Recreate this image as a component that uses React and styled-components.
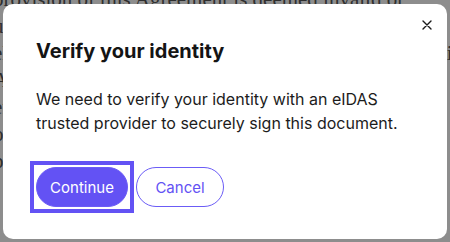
import React from 'react';
import styled, { createGlobalStyle } from 'styled-components';

const GlobalStyle = createGlobalStyle`
  html, body {
    margin: 0;
    padding: 0;
    background: #8d8d8d;
    overflow: hidden;
  }
`;

const Page = styled.div`
  position: relative;
  width: 450px;
  height: 242px;
  overflow: hidden;
`;

const Doc = styled.div`
  margin: -14px 0 0 -7px;
  font-family: 'Liberation Serif', serif;
  font-size: 21px;
  line-height: 27px;
  color: #2f2f2f;
  width: 470px;
`;

const Overlay = styled.div`
  position: absolute;
  inset: 0;
  padding: 4px 3px 3px 3px;
  display: flex;
  align-items: stretch;
`;

const Dialog = styled.div`
  position: relative;
  flex: 1;
  background: #ffffff;
  border-radius: 10px;
  padding: 33px 33px 0 33px;
  box-sizing: border-box;
  font-family: Inter, 'Noto Sans', sans-serif;
  color: #141414;
`;

const CloseButton = styled.button`
  position: absolute;
  top: 9px;
  right: 8px;
  width: 24px;
  height: 24px;
  border: none;
  background: none;
  padding: 0;
  display: flex;
  align-items: center;
  justify-content: center;
  cursor: pointer;
`;

const Title = styled.h2`
  margin: 0;
  font-size: 20px;
  line-height: 28px;
  font-weight: 700;
`;

const Body = styled.p`
  margin: 22px 0 0 0;
  font-size: 16px;
  line-height: 24px;
  font-weight: 400;
  color: #1c1c1c;
`;

const Actions = styled.div`
  display: flex;
  align-items: center;
  gap: 2px;
  margin-top: 26px;
  margin-left: -6px;
`;

const FocusRing = styled.span`
  display: inline-flex;
  padding: 2px;
  border: 4px solid #6352f4;
`;

const Button = styled.button`
  height: 40px;
  width: ${(p) => p.$width}px;
  padding: 0;
  border-radius: 20px;
  font-family: Inter, 'Noto Sans', sans-serif;
  font-size: 15px;
  cursor: pointer;
  border: 1px solid #6b5cf6;
  background: ${(p) => (p.$primary ? '#6352f4' : '#ffffff')};
  color: ${(p) => (p.$primary ? '#ffffff' : '#6352f4')};
  outline: none;
`;

export default function App() {
  return (
    <Page>
      <GlobalStyle />
      <Doc>
        provision of this Agreement is deemed invalid or
        unenforceable, that provision shall be limited or
        eliminated to the minimum extent necessary so that
        this Agreement shall otherwise remain in full force
        and effect and enforceable between the parties. No
        waiver of any term shall be deemed a further waiver.
        - The parties agree to the terms above.
      </Doc>
      <Overlay>
        <Dialog role="dialog" aria-labelledby="verify-title">
          <CloseButton aria-label="Close">
            <svg width="10" height="10" viewBox="0 0 10 10">
              <path d="M1 1 L9 9 M9 1 L1 9" stroke="#1a1a1a" strokeWidth="1.4" strokeLinecap="round" />
            </svg>
          </CloseButton>
          <Title id="verify-title">Verify your identity</Title>
          <Body>
            We need to verify your identity with an eIDAS trusted provider to securely sign this document.
          </Body>
          <Actions>
            <FocusRing>
              <Button $primary $width={92}>Continue</Button>
            </FocusRing>
            <Button $width={88}>Cancel</Button>
          </Actions>
        </Dialog>
      </Overlay>
    </Page>
  );
}
